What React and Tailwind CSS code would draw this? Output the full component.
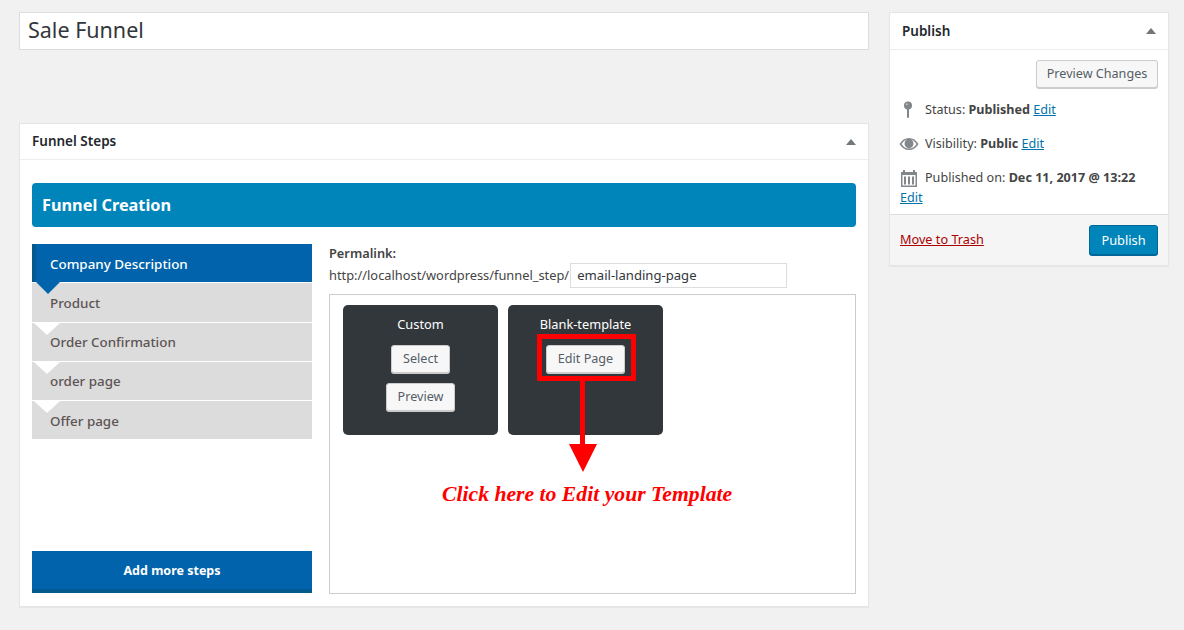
import React from 'react';

const sans = 'font-["Noto_Sans",sans-serif]';

function Caret() {
  return <div className="w-0 h-0 border-x-[5px] border-x-transparent border-b-[6px] border-b-[#72777c]" />;
}

function PinIcon() {
  return (
    <svg width="20" height="20" viewBox="0 0 20 20" className="shrink-0">
      <circle cx="8" cy="5.500" r="4" fill="#82878c" />
      <circle cx="6.800" cy="4.300" r="1" fill="#c4c7ca" />
      <rect x="7" y="8" width="2" height="10" rx="1" fill="#82878c" />
    </svg>
  );
}

function EyeIcon() {
  return (
    <svg width="20" height="14" viewBox="0 0 20 14" className="shrink-0 -ml-[1px]">
      <path d="M0.5 7C3 3 6 1 10 1s7 2 9.5 6c-2.500 4-5.500 6-9.500 6S3 11 0.500 7z" fill="#82878c" />
      <path d="M2.500 7C4.500 4.500 6 3.200 8 2.600a4.500 4.500 0 1 0 4 0c2 .600 3.500 1.900 5.500 4.400-2 2.900-4.200 4.600-7.500 4.600S4.500 9.900 2.500 7z" fill="#fff" />
      <circle cx="10" cy="6" r="3.600" fill="#82878c" />
    </svg>
  );
}

function CalendarIcon() {
  return (
    <svg width="18" height="18" viewBox="0 0 18 18" className="shrink-0">
      <path d="M1 3h2V1h2v2h8V1h2v2h2v15H1z" fill="#82878c" />
      <rect x="2.500" y="6" width="13" height="10.500" fill="#fff" />
      <path d="M4 7.500h2v8H4zM8 7.500h2v8H8zM12 7.500h2v8h-2z" fill="#82878c" />
    </svg>
  );
}

function WpButton({ children, wide }) {
  return (
    <button className={`h-[28px] ${wide ? 'w-[122px]' : 'px-[11px]'} bg-[#f7f7f7] border border-[#cccccc] rounded-[3px] shadow-[0_1px_0_#cccccc] text-[12.6px] text-[#555d66] whitespace-nowrap`}>
      {children}
    </button>
  );
}

function Step({ label, active, notch, tall, lift }) {
  const box = active
    ? 'h-[38px] bg-[#0063ab] text-white border-l-[4px] border-l-[#045a8d] pl-[14px]'
    : tall
      ? 'h-[39px] bg-[#dcdcdc] text-[#5d5454] pl-[18px]'
      : 'h-[38px] bg-[#dcdcdc] text-[#5d5454] pl-[18px]';
  return (
    <div className={`relative flex items-center text-[13.4px] font-medium ${box} ${lift ? '' : 'pt-[2px]'}`}>
      {label}
      {active && <div className="absolute left-0 top-[38px] z-10 w-0 h-0 border-x-[12px] border-x-transparent border-t-[12px] border-t-[#0063ab]" />}
      {notch && <div className="absolute left-[2px] top-0 w-0 h-0 border-x-[13px] border-x-transparent border-t-[12px] border-t-white" />}
    </div>
  );
}

function TemplateCard({ title, children }) {
  return (
    <div className="w-[155px] h-[130px] bg-[#32373c] rounded-[5px] flex flex-col items-center pt-[10px] gap-[10px]">
      <div className="text-[12.8px] leading-[19px] text-white mb-[1px]">{title}</div>
      {children}
    </div>
  );
}

export default function App() {
  return (
    <div className={`min-h-[630px] bg-[#f1f1f1] pt-[12px] pl-[19px] flex gap-[20px] text-[#444] ${sans}`}>
      <div className="w-[850px]">
        <div className="h-[38px] bg-white border border-[#dddddd] flex items-center pl-[8px] pb-[2px] text-[21.500px] text-[#32373c]">Sale Funnel</div>

        <div className="mt-[73px] h-[484px] bg-white border border-[#e5e5e5] shadow-[0_1px_1px_rgba(0,0,0,0.04)]">
          <div className="h-[36px] border-b border-[#eeeeee] flex items-center justify-between px-[12px]">
            <span className="text-[13.500px] font-semibold text-[#23282d] pb-[1px]">Funnel Steps</span>
            <Caret />
          </div>

          <div className="px-[12px] pt-[23px]">
            <div className="h-[44px] rounded-[4px] bg-[#0085ba] flex items-center pl-[10px] text-[16.300px] font-bold text-white">Funnel Creation</div>

            <div className="mt-[17px] flex gap-[17px]">
              <div className="w-[280px] h-[349px] flex flex-col justify-between">
                <div className="flex flex-col gap-[1px]">
                  <Step label="Company Description" active />
                  <Step label="Product" tall />
                  <Step label="Order Confirmation" notch lift />
                  <Step label="order page" notch lift />
                  <Step label="Offer page" notch />
                </div>
                <button className="h-[42px] pt-[2px] bg-[#0063ab] border-b-[4px] border-b-[#045a8d] text-[12.500px] font-bold text-white">Add more steps</button>
              </div>

              <div className="w-[527px]">
                <div className="text-[12.800px] leading-[18px] font-semibold">Permalink:</div>
                <div className="mt-[1px] flex items-center text-[12.840px]">
                  <span>http://localhost/wordpress/funnel_step/</span>
                  <div className="ml-[1px] w-[217px] h-[25px] border border-[#dddddd] bg-white flex items-center pl-[6px] text-[13.100px] text-[#32373c]">email-landing-page</div>
                </div>
                <div className="relative mt-[6px] h-[300px] border border-[#cccccc] bg-white pl-[13px] pt-[10px] flex gap-[10px] items-start">
                  <TemplateCard title="Custom">
                    <WpButton>Select</WpButton>
                    <WpButton>Preview</WpButton>
                  </TemplateCard>
                  <TemplateCard title="Blank-template">
                    <WpButton>Edit Page</WpButton>
                  </TemplateCard>

                  {/* annotation drawn on top of the screenshot */}
                  <div className="absolute left-[207px] top-[39px] w-[99px] h-[47px] border-[5px] border-[#ff0000]" />
                  <svg className="absolute left-[239px] top-[85px]" width="30" height="94" viewBox="0 0 30 94">
                    <rect x="11" y="0" width="5" height="66" fill="#ff0000" />
                    <path d="M0 64h28L14 92z" fill="#ff0000" />
                  </svg>
                  <div className='absolute left-[112px] top-[184px] text-[21.700px] leading-[30px] italic font-bold text-[#ff0000] whitespace-nowrap font-["Liberation_Serif",serif]'>Click here to Edit your Template</div>
                </div>
              </div>
            </div>
          </div>
        </div>
      </div>

      <div className="w-[280px] h-[254px] bg-white border border-[#e5e5e5] shadow-[0_1px_1px_rgba(0,0,0,0.04)] flex flex-col">
        <div className="h-[37px] border-b border-[#eeeeee] flex items-center justify-between px-[12px]">
          <span className="text-[13.500px] font-semibold text-[#23282d]">Publish</span>
          <Caret />
        </div>
        <div className="flex-1 px-[10px] pt-[10px] text-[12.600px]">
          <div className="flex justify-end"><WpButton wide>Preview Changes</WpButton></div>
          <div className="mt-[10px] flex items-center h-[24px]">
            <div className="w-[25px]"><PinIcon /></div>
            <span>Status: <b>Published</b> <a className="text-[#0073aa] underline">Edit</a></span>
          </div>
          <div className="mt-[10px] flex items-center h-[24px]">
            <div className="w-[25px]"><EyeIcon /></div>
            <span>Visibility: <b>Public</b> <a className="text-[#0073aa] underline">Edit</a></span>
          </div>
          <div className="mt-[10px] flex items-center h-[24px]">
            <div className="w-[25px]"><CalendarIcon /></div>
            <span>Published on: <b>Dec 11, 2017 @ 13:22</b></span>
          </div>
          <a className="block leading-[15px] text-[#0073aa] underline">Edit</a>
        </div>
        <div className="h-[51px] border-t border-[#dddddd] bg-[#f5f5f5] flex items-center justify-between px-[10px]">
          <a className="text-[12.700px] text-[#a00] underline">Move to Trash</a>
          <button className="h-[30px] w-[69px] pt-[1px] rounded-[3px] bg-[#0085ba] border border-[#006799] shadow-[0_1px_0_#006799] text-[12.800px] text-white">Publish</button>
        </div>
      </div>
    </div>
  );
}
